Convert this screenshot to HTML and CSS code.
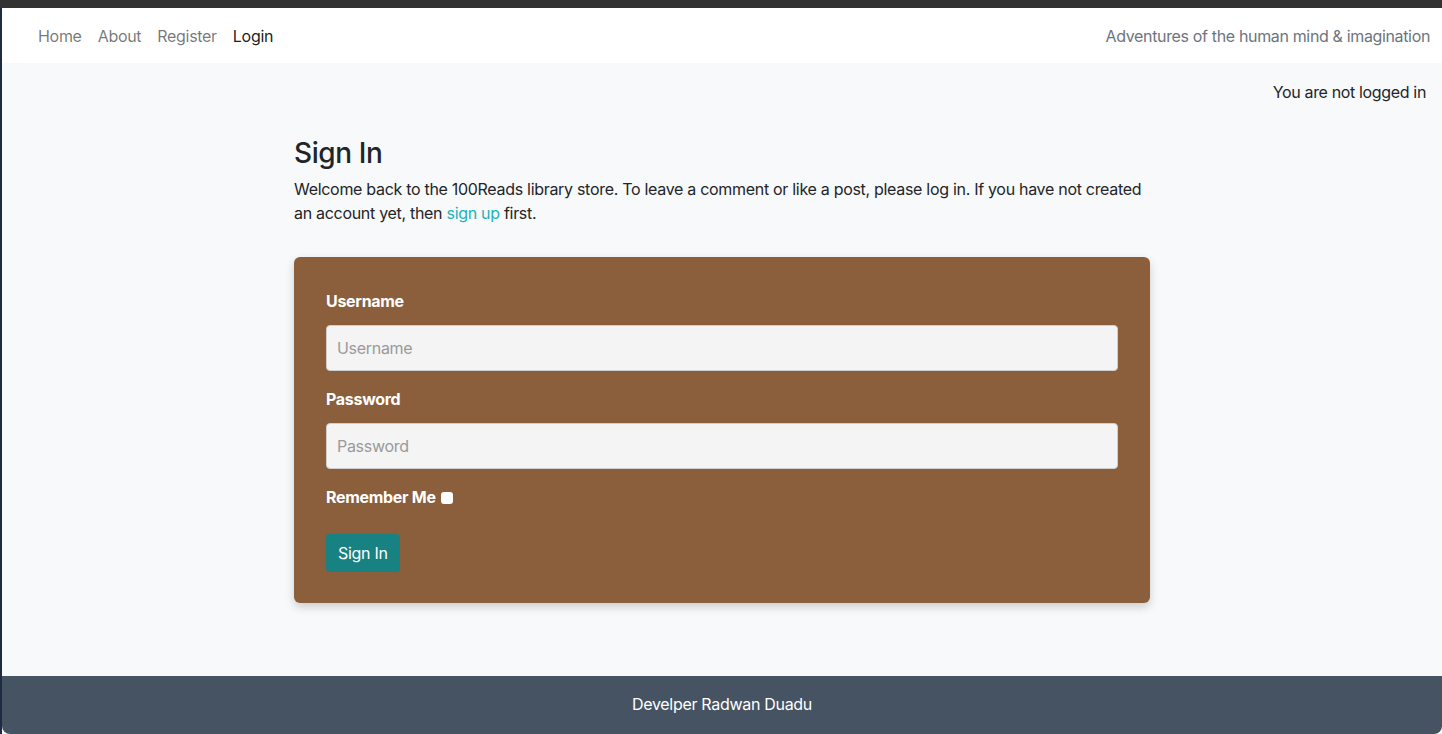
FILE: index.html
```html
<!DOCTYPE html>
<html lang="en">
<head>
<meta charset="utf-8">
<title>Sign In - 100Reads</title>
<link rel="stylesheet" href="styles.css">
</head>
<body>
<div class="topbar"></div>
<div class="page">
  <nav class="navbar">
    <ul class="nav-links">
      <li><a href="#" class="nav-link">Home</a></li>
      <li><a href="#" class="nav-link">About</a></li>
      <li><a href="#" class="nav-link">Register</a></li>
      <li><a href="#" class="nav-link active">Login</a></li>
    </ul>
    <span class="tagline">Adventures of the human mind &amp; imagination</span>
  </nav>
  <main class="main">
    <p class="status">You are not logged in</p>
    <section class="container">
      <h3 class="title">Sign In</h3>
      <p class="intro">Welcome back to the 100Reads library store. To leave a comment or like a post, please log in. If you have not created an account yet, then <a href="#" class="link">sign up</a> first.</p>
      <form class="card">
        <label class="label" for="u">Username</label>
        <input class="input" id="u" type="text" placeholder="Username">
        <label class="label" for="p">Password</label>
        <input class="input" id="p" type="password" placeholder="Password">
        <div class="remember"><span class="label-inline">Remember Me</span><span class="checkbox"></span></div>
        <button type="button" class="btn">Sign In</button>
      </form>
    </section>
  </main>
  <footer class="footer">Develper Radwan Duadu</footer>
</div>
</body>
</html>
```
FILE: styles.css
```css
* { box-sizing: border-box; }
html, body { margin: 0; padding: 0; }
body {
  font-family: Inter, "Noto Sans", sans-serif;
  font-size: 16px;
  line-height: 24px;
  color: #212529;
  background: #2d2d2d;
  height: 734px;
  display: flex;
  flex-direction: column;
}
.topbar { height: 8px; background: #323232; flex: none; }
.page {
  flex: 1;
  display: flex;
  flex-direction: column;
  background: #f8f9fa;
  border-left: 2px solid #1f2b40;
}
.navbar {
  height: 55px;
  background: #fff;
  display: flex;
  align-items: center;
  justify-content: space-between;
  padding: 0 12px 0 28px;
  flex: none;
}
.nav-links { list-style: none; margin: 0; padding: 0; display: flex; }
.nav-link {
  display: block;
  padding: 0 8px;
  color: rgba(0,0,0,.55);
  text-decoration: none;
  letter-spacing: -0.3px;
}
.nav-link.active { color: rgba(0,0,0,.9); }
.tagline { color: #6c757d; letter-spacing: -0.35px; }
.main { flex: 1; display: flex; flex-direction: column; }
.status { margin: 17px 16px 0 0; text-align: right; letter-spacing: -0.35px; }
.container { width: 856px; margin: 32px auto 0; }
.title { font-size: 28px; font-weight: 500; line-height: 34px; margin: 0 0 7px; letter-spacing: -0.4px; }
.intro { margin: 0 0 32px; letter-spacing: -0.3px; }
.link { color: #20b2b8; text-decoration: none; }
.card {
  background: #8b5e3c;
  border-radius: 6px;
  padding: 32px 32px 31px;
  box-shadow: 0 4px 10px rgba(0,0,0,.18);
  display: flex;
  flex-direction: column;
  align-items: flex-start;
}
.label { color: #fff; font-weight: 700; margin-bottom: 12px; letter-spacing: -0.3px; }
.input {
  width: 100%;
  height: 46px;
  border: 1px solid #cfcfcf;
  border-radius: 4px;
  background: #f4f4f4;
  padding: 0 10px;
  font: inherit;
  color: #212529;
  margin-bottom: 16px;
  letter-spacing: -0.3px;
}
.input::placeholder { color: #9a9a9a; }
.remember { display: flex; align-items: center; gap: 5px; }
.label-inline { color: #fff; font-weight: 700; letter-spacing: -0.3px; }
.checkbox {
  width: 12px; height: 12px;
  background: #fff;
  border-radius: 3px;
  margin-top: 2px;
}
.btn {
  margin-top: 25px;
  height: 38px;
  padding: 0 12px;
  border: none;
  border-radius: 4px;
  background: #188181;
  color: #fff;
  font: inherit;
  letter-spacing: -0.3px;
}
.footer {
  flex: none;
  height: 58px;
  padding-bottom: 2px;
  background: #465362;
  color: #fff;
  display: flex;
  align-items: center;
  justify-content: center;
  letter-spacing: -0.3px;
  border-radius: 0 0 8px 8px;
}
```
